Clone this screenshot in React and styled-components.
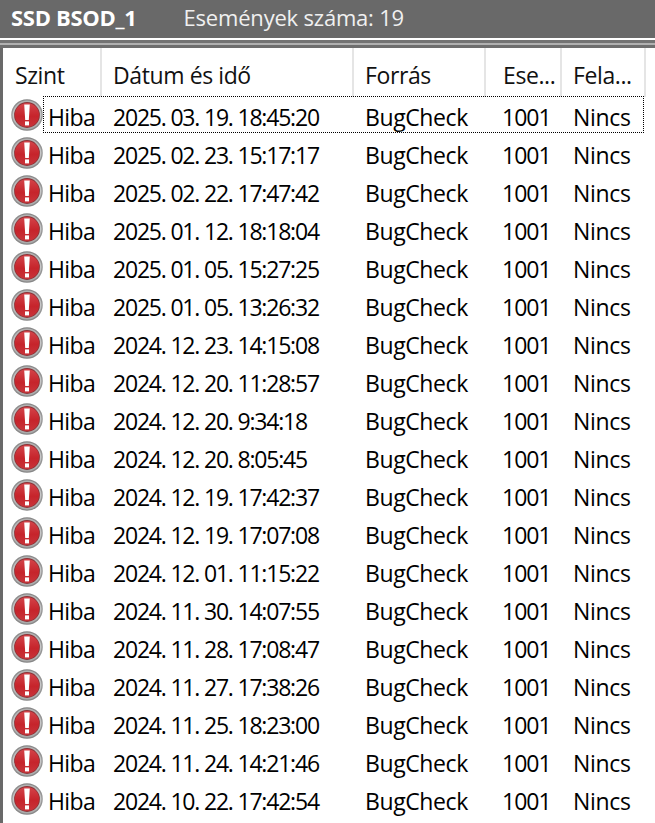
import styled, { createGlobalStyle } from "styled-components";

const COLUMNS = "99px 252px 132px 76px 84px";

const events = [
  "2025. 03. 19. 18:45:20",
  "2025. 02. 23. 15:17:17",
  "2025. 02. 22. 17:47:42",
  "2025. 01. 12. 18:18:04",
  "2025. 01. 05. 15:27:25",
  "2025. 01. 05. 13:26:32",
  "2024. 12. 23. 14:15:08",
  "2024. 12. 20. 11:28:57",
  "2024. 12. 20. 9:34:18",
  "2024. 12. 20. 8:05:45",
  "2024. 12. 19. 17:42:37",
  "2024. 12. 19. 17:07:08",
  "2024. 12. 01. 11:15:22",
  "2024. 11. 30. 14:07:55",
  "2024. 11. 28. 17:08:47",
  "2024. 11. 27. 17:38:26",
  "2024. 11. 25. 18:23:00",
  "2024. 11. 24. 14:21:46",
  "2024. 10. 22. 17:42:54",
];

const GlobalStyle = createGlobalStyle`
  html, body {
    margin: 0;
    padding: 0;
    background: #fff;
  }
  body {
    font-family: "Open Sans", "Noto Sans", sans-serif;
    overflow: hidden;
  }
`;

const ErrorIcon = () => (
  <IconSvg width="32" height="32" viewBox="0 0 32 32">
    <defs>
      <linearGradient id="ringFill" x1="0" y1="0" x2="0" y2="1">
        <stop offset="0" stopColor="#858585" />
        <stop offset="0.5" stopColor="#9c9c9c" />
        <stop offset="1" stopColor="#858585" />
      </linearGradient>
      <linearGradient id="ringLight" x1="0" y1="0" x2="0" y2="1">
        <stop offset="0" stopColor="#b0b0b0" />
        <stop offset="0.5" stopColor="#c8c8c8" />
        <stop offset="1" stopColor="#a8a8a8" />
      </linearGradient>
      <linearGradient id="redFill" x1="0" y1="0" x2="0" y2="1">
        <stop offset="0" stopColor="#d4444a" />
        <stop offset="0.55" stopColor="#c6242b" />
        <stop offset="1" stopColor="#c8343a" />
      </linearGradient>
    </defs>
    <circle cx="16" cy="16" r="15.8" fill="url(#ringFill)" />
    <circle cx="16" cy="16" r="14.4" fill="url(#ringLight)" />
    <circle cx="16" cy="16" r="12.9" fill="#8c3236" />
    <circle cx="16" cy="16" r="12.1" fill="url(#redFill)" />
    <path d="M13.2 5.5h5.6l-1 15.5h-3.6z" fill="#fff" />
    <rect x="14" y="22.4" width="4" height="4" fill="#fff" />
  </IconSvg>
);

const App = () => {
  return (
    <>
      <GlobalStyle />
      <Window>
        <TitleBar>
          <TitleName>SSD BSOD_1</TitleName>
          <TitleCount>Események száma: 19</TitleCount>
        </TitleBar>
        <Divider>
          <WhiteLine />
          <GreyBand />
          <LightLine />
          <GreyBandLow />
        </Divider>
        <Panel>
          <HeaderRow>
            <HeaderCell>Szint</HeaderCell>
            <HeaderCell $indent={11}>Dátum és idő</HeaderCell>
            <HeaderCell $indent={11}>Forrás</HeaderCell>
            <HeaderCell $indent={17}>Ese...</HeaderCell>
            <HeaderCell $indent={11}>Fela...</HeaderCell>
          </HeaderRow>
          {events.map((date, index) => (
            <Row key={date}>
              <LevelCell>
                <ErrorIcon />
                <LevelText>Hiba</LevelText>
              </LevelCell>
              <DateCell>{date}</DateCell>
              <SourceCell>BugCheck</SourceCell>
              <IdCell>1001</IdCell>
              <TaskCell>Nincs</TaskCell>
              {index === 0 && <FocusBox />}
            </Row>
          ))}
        </Panel>
      </Window>
    </>
  );
};

export default App;

const Window = styled.div`
  width: 655px;
  height: 823px;
  display: flex;
  flex-direction: column;
  overflow: hidden;
  background: #696969;
`;

const TitleBar = styled.div`
  height: 38px;
  box-sizing: border-box;
  padding: 0 0 5px 11px;
  display: flex;
  align-items: center;
  gap: 47px;
  color: #fff;
  font-size: 22px;
`;

const TitleName = styled.span`
  font-weight: 700;
  letter-spacing: -0.3px;
`;

const TitleCount = styled.span`
  font-weight: 400;
  color: #f0f0f0;
  letter-spacing: -0.2px;
`;

const Divider = styled.div`
  display: flex;
  flex-direction: column;
`;

const WhiteLine = styled.div`
  height: 2px;
  background: #fff;
`;

const GreyBand = styled.div`
  height: 3px;
  background: #737373;
`;

const LightLine = styled.div`
  height: 2px;
  background: #b0b0b0;
`;

const GreyBandLow = styled.div`
  height: 3px;
  background: #6e6e6e;
`;

const Panel = styled.div`
  flex: 1;
  margin-left: 3px;
  background: #fff;
  display: flex;
  flex-direction: column;
  font-size: 23px;
  letter-spacing: -0.4px;
  color: #000;
`;

const HeaderRow = styled.div`
  display: grid;
  grid-template-columns: ${COLUMNS};
  height: 49px;
  flex-shrink: 0;
`;

const HeaderCell = styled.div`
  display: flex;
  align-items: center;
  padding-left: ${(props) => props.$indent || 12}px;
  padding-top: 5px;
  border-right: 2px solid #e5e5e5;
  color: #111;
  white-space: nowrap;
  overflow: hidden;
`;

const Row = styled.div`
  position: relative;
  display: grid;
  grid-template-columns: ${COLUMNS};
  height: 38px;
  padding-top: 2px;
  box-sizing: border-box;
  flex-shrink: 0;
  align-items: center;
`;

const LevelCell = styled.div`
  display: flex;
  align-items: center;
  padding-left: 8px;
  gap: 5px;
`;

const IconSvg = styled.svg`
  flex-shrink: 0;
  margin-top: -5px;
`;

const LevelText = styled.span`
  line-height: 1;
  letter-spacing: -0.6px;
`;

const DateCell = styled.div`
  padding-left: 11px;
  letter-spacing: -1.2px;
`;

const SourceCell = styled.div`
  padding-left: 11px;
`;

const IdCell = styled.div`
  padding-left: 16px;
  letter-spacing: -1px;
`;

const TaskCell = styled.div`
  padding-left: 11px;
  letter-spacing: -0.3px;
`;

const FocusBox = styled.div`
  position: absolute;
  left: 40px;
  top: -1px;
  width: 601px;
  height: 37px;
  border: 1px dotted #000;
  box-sizing: border-box;
  pointer-events: none;
`;
